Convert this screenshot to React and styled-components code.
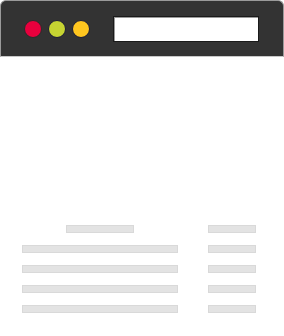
import { Fragment } from "react";
import styled, { createGlobalStyle } from "styled-components";

const GlobalStyle = createGlobalStyle`
  body {
    margin: 0;
    background: #fff;
    font-family: "Liberation Sans", Arial, sans-serif;
  }
`;

const Page = styled.div`
  width: 284px;
  height: 336px;
  overflow: hidden;
`;

const Toolbar = styled.div`
  box-sizing: border-box;
  width: 284px;
  height: 57px;
  display: flex;
  align-items: center;
  padding-left: 23px;
  background: #333333;
  border: 1px solid #9a9a9a;
  border-bottom-color: #c8c8c8;
  border-radius: 6px 6px 0 0;
`;

const Dots = styled.div`
  display: flex;
  gap: 6px;
`;

const Dot = styled.span`
  box-sizing: border-box;
  width: 18px;
  height: 18px;
  border-radius: 50%;
  background: ${(p) => p.$color};
  border: 1.5px solid ${(p) => p.$ring || "#1c1c36"};
`;

const AddressBar = styled.div`
  box-sizing: border-box;
  margin-left: 23px;
  width: 146px;
  height: 26px;
  background: #fff;
  border: 1px solid #1a1a1a;
  box-shadow: inset 1px 1px 0 #9a9a9a;
`;

const Table = styled.div`
  display: grid;
  grid-template-columns: 156px 48px;
  column-gap: 30px;
  row-gap: 12px;
  padding: 168px 0 0 22px;
`;

const Bar = styled.div`
  box-sizing: border-box;
  height: 8px;
  width: ${(p) => p.$width || "100%"};
  justify-self: ${(p) => (p.$center ? "center" : "stretch")};
  background: #e3e3e3;
  border: 1px solid #d9d9d9;
`;

const rows = [0, 1, 2, 3];

const App = () => {
  return (
    <Page>
      <GlobalStyle />
      <Toolbar>
        <Dots>
          <Dot $color="#e8003d" $ring="#2b2b2b" />
          <Dot $color="#c6d432" />
          <Dot $color="#ffc61f" />
        </Dots>
        <AddressBar />
      </Toolbar>

      <Table>
        <Bar $width="68px" $center />
        <Bar />
        {rows.map((r) => (
          <Fragment key={r}>
            <Bar />
            <Bar />
          </Fragment>
        ))}
      </Table>
    </Page>
  );
};

export default App;
